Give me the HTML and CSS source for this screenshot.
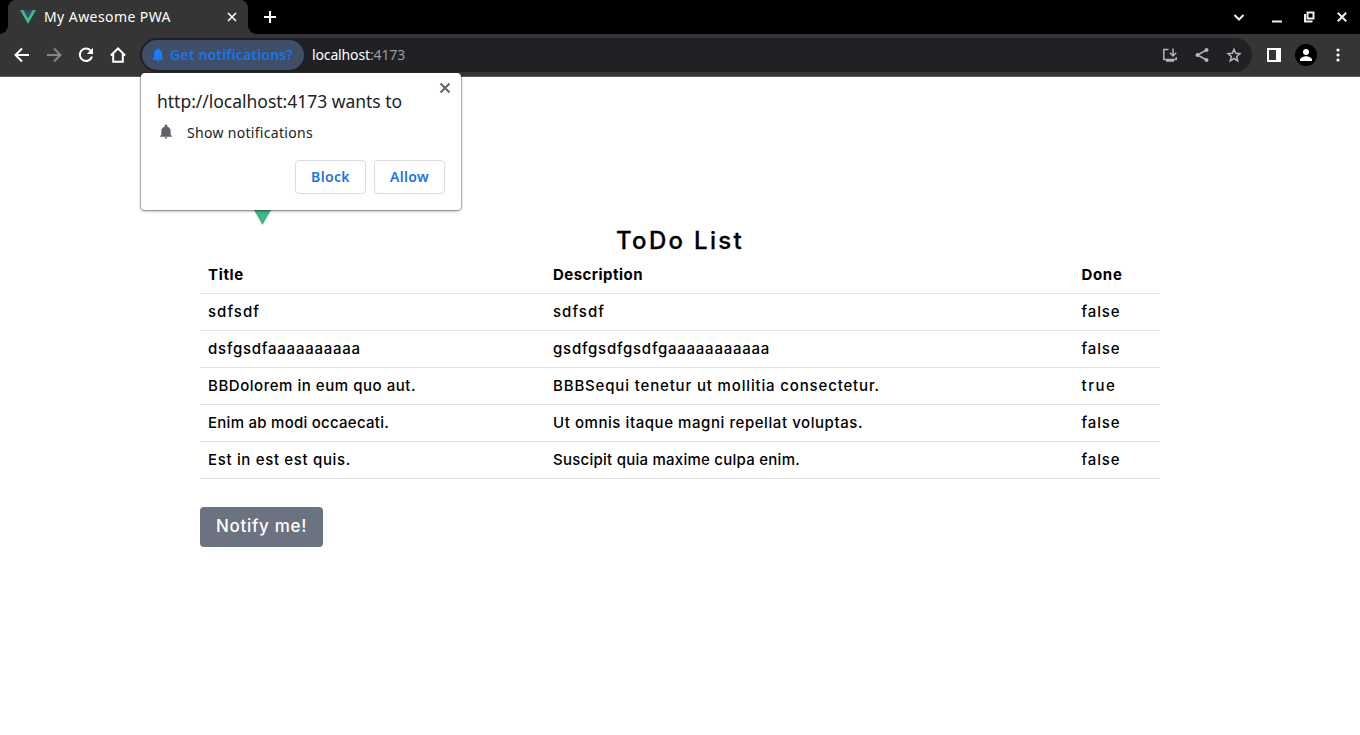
FILE: index.html
```html
<!DOCTYPE html>
<html lang="en">
<head>
<meta charset="utf-8">
<title>My Awesome PWA</title>
<link rel="stylesheet" href="styles.css">
</head>
<body>
<header class="tabstrip">
  <div class="tab">
    <svg class="favicon" viewBox="0 0 262 227"><path fill="#41b883" d="M161 0l-30 52L101 0H0l131 227L262 0z"/><path fill="#34495e" d="M161 0l-30 52L101 0H52l79 136L210 0z"/></svg>
    <span class="tab-title">My Awesome PWA</span>
    <svg class="tab-close" viewBox="0 0 16 16"><path d="M4 4l8 8M12 4l-8 8"/></svg>
  </div>
  <svg class="new-tab" viewBox="0 0 16 16"><path d="M8 2v12M2 8h12"/></svg>
  <div class="window-controls">
    <svg viewBox="0 0 16 16"><path d="M3.500 6L8 10.500 12.500 6"/></svg>
    <svg viewBox="0 0 16 16"><path d="M3 12.500h10"/></svg>
    <svg viewBox="0 0 16 16"><path d="M6.500 3.500h6v6h-6zM4 5v7.500h7.500"/></svg>
    <svg viewBox="0 0 16 16"><path d="M3.800 3.800l8.400 8.400M12.200 3.800l-8.400 8.400"/></svg>
  </div>
</header>
<nav class="toolbar">
  <div class="nav-buttons">
    <svg viewBox="0 0 16 16"><path d="M15 8H2M8 1.500L1.500 8 8 14.500"/></svg>
    <svg class="disabled" viewBox="0 0 16 16"><path d="M1 8h13M8 1.500L14.500 8 8 14.500"/></svg>
    <svg viewBox="0 0 16 16"><path d="M13 4A6.200 6.200 0 1 0 14 9.500"/><path class="solid" d="M15 .8v6.200H8.800z"/></svg>
    <svg viewBox="0 0 16 16"><path d="M.8 8.500L8 1.500l7.200 7M3.200 7v7.700h9.600V7"/></svg>
  </div>
  <div class="omnibox">
    <div class="chip">
      <svg viewBox="0 0 24 24"><path d="M12 22c1.100 0 2-.9 2-2h-4c0 1.100.9 2 2 2zM18 16V10.500c0-3.100-1.600-5.600-4.500-6.300V3.500a1.500 1.500 0 0 0-3 0v.7C7.600 4.900 6 7.400 6 10.500V16l-2 2v1h16v-1z"/></svg>
      <span class="chip-text">Get notifications?</span>
    </div>
    <div class="url"><span class="host">localhost</span><span class="port">:4173</span></div>
    <div class="omni-icons">
      <svg viewBox="0 0 16 16"><path d="M6.500 2.500H1.800v10h12.400V10M11 1.500v7M7.800 5.800L11 9l3.200-3.200"/><path class="solid" d="M4 12h8v2.800H4z"/></svg>
      <svg viewBox="0 0 16 16"><path d="M12.500 3L3.500 8l9 5"/><circle class="solid" cx="12.500" cy="3" r="2"/><circle class="solid" cx="3.500" cy="8" r="2"/><circle class="solid" cx="12.500" cy="13" r="2"/></svg>
      <svg viewBox="0 0 16 16"><path d="M8 2.200l1.700 4 4.300.4-3.300 2.900 1 4.300L8 11.500l-3.700 2.300 1-4.300L2 6.600l4.300-.4z"/></svg>
    </div>
  </div>
  <svg class="side-panel" viewBox="0 0 14 14"><path fill="#fff" fill-rule="evenodd" d="M0 0h14v14H0zM2 2v10h7V2z"/></svg>
  <svg class="avatar" viewBox="0 0 22 22"><circle cx="11" cy="11" r="11"/><g fill="#fff"><circle cx="11" cy="7.900" r="3"/><path d="M5 17v-1.500c0-2 4-3.300 6-3.300s6 1.300 6 3.300V17z"/></g></svg>
  <svg class="menu-dots" viewBox="0 0 4 14"><g fill="#fff"><circle cx="2" cy="2" r="1.600"/><circle cx="2" cy="7" r="1.600"/><circle cx="2" cy="12" r="1.600"/></g></svg>
</nav>
<section class="prompt">
  <svg class="prompt-close" viewBox="0 0 12 12"><path d="M1.500 1.500l9 9M10.500 1.500l-9 9"/></svg>
  <div class="prompt-title">http://localhost:4173 wants to</div>
  <div class="permission">
    <svg viewBox="0 0 24 24"><path d="M12 22c1.100 0 2-.9 2-2h-4c0 1.100.9 2 2 2zM19 16V10.500c0-3.300-1.900-5.800-5-6.500V2.800a2 2 0 0 0-4 0V4c-3.100.7-5 3.200-5 6.500V16l-2 2v1h18v-1z"/></svg>
    <span>Show notifications</span>
  </div>
  <div class="prompt-actions"><button>Block</button><button>Allow</button></div>
</section>
<main class="page">
  <svg class="logo" viewBox="0 0 262 227"><path fill="#41b883" d="M161 0l-30 52L101 0H0l131 227L262 0z"/><path fill="#34495e" d="M161 0l-30 52L101 0H52l79 136L210 0z"/></svg>
  <h1>ToDo List</h1>
  <table>
    <thead><tr><th>Title</th><th>Description</th><th>Done</th></tr></thead>
    <tbody>
      <tr class="wide"><td>sdfsdf</td><td>sdfsdf</td><td>false</td></tr>
      <tr class="loose"><td>dsfgsdfaaaaaaaaaa</td><td>gsdfgsdfgsdfgaaaaaaaaaaa</td><td>false</td></tr>
      <tr class="mixed"><td>BBDolorem in eum quo aut.</td><td>BBBSequi tenetur ut mollitia consectetur.</td><td>true</td></tr>
      <tr class="tight"><td>Enim ab modi occaecati.</td><td>Ut omnis itaque magni repellat voluptas.</td><td>false</td></tr>
      <tr class="medium"><td>Est in est est quis.</td><td>Suscipit quia maxime culpa enim.</td><td>false</td></tr>
    </tbody>
  </table>
  <button class="notify">Notify me!</button>
</main>
</body>
</html>
```
FILE: styles.css
```css
* { box-sizing: border-box; }
body { margin: 0; height: 735px; overflow: hidden; background: #fff; font-family: "Noto Sans", "Open Sans", sans-serif; }
svg { display: block; flex: none; }
span, td, th { white-space: nowrap; }

.tabstrip { display: flex; align-items: center; height: 34px; padding: 0 10px 0 8px; background: #000; }
.tab { position: relative; display: flex; align-items: center; width: 240px; height: 34px; padding: 0 8px 0 12px; background: #353535; border-radius: 8px 8px 0 0; color: #fff; font-size: 14px; }
.tab::before, .tab::after { content: ""; position: absolute; bottom: 0; width: 8px; height: 8px; }
.tab::before { left: -8px; background: radial-gradient(circle at 0 0, transparent 7.5px, #353535 8px); }
.tab::after { right: -8px; background: radial-gradient(circle at 100% 0, transparent 7.5px, #353535 8px); }
.tab-title { padding-bottom: 2px; letter-spacing: .427px; }
.favicon { width: 16px; height: 14px; margin-right: 8px; }
.tab-close { width: 16px; height: 16px; margin-left: auto; fill: none; stroke: #fff; stroke-width: 1.6; }
.new-tab { width: 16px; height: 16px; margin-left: 14px; fill: none; stroke: #fff; stroke-width: 2; }
.window-controls { display: flex; margin-left: auto; }
.window-controls svg { width: 16px; height: 16px; margin-left: 17px; fill: none; stroke: #eee; stroke-width: 2; }
.window-controls svg:nth-child(2) { margin-left: 22px; }
.window-controls svg:nth-child(3) { margin-left: 16px; }

.toolbar { display: flex; align-items: center; height: 43px; padding: 0 20px 0 14px; background: #353535; border-bottom: 1px solid #5b5b5b; }
.nav-buttons { display: flex; gap: 16px; width: 126px; }
.nav-buttons svg { width: 16px; height: 16px; fill: none; stroke: #fff; stroke-width: 2; }
.nav-buttons .disabled { stroke: #868686; }
.nav-buttons .solid { fill: #fff; stroke: none; }
.omnibox { display: flex; align-items: center; width: 1112px; height: 34px; padding: 2px; background: #202124; border-radius: 17px; }
.chip { display: flex; align-items: center; width: 162px; height: 30px; padding-left: 8px; border-radius: 15px; background: #3f4f68; color: #1a73e8; font-size: 14px; font-weight: 600; }
.chip svg { width: 16px; height: 16px; margin-right: 4px; fill: #1a7cff; }
.chip-text { padding-bottom: 2px; letter-spacing: .175px; }
.url { display: flex; margin-left: 8px; padding-bottom: 2px; font-size: 14px; letter-spacing: -.135px; color: #fff; }
.port { color: #9a9da1; }
.omni-icons { display: flex; gap: 16px; margin-left: auto; margin-right: 8px; }
.omni-icons svg { width: 16px; height: 16px; fill: none; stroke: #b4b5b7; stroke-width: 1.5; }
.omni-icons .solid { fill: #b4b5b7; stroke: none; }
.side-panel { width: 14px; height: 14px; margin-left: 15px; }
.avatar { width: 22px; height: 22px; margin-left: 14px; }
.menu-dots { width: 4px; height: 14px; margin-left: auto; }

.prompt { position: absolute; left: 141px; top: 73px; width: 320px; height: 137px; padding: 16px; background: #fff; border-radius: 4px; box-shadow: 0 0 1px 1px rgba(0,0,0,.22), 0 1px 3px rgba(0,0,0,.4); color: #202124; }
.prompt-close { position: absolute; right: 10px; top: 9px; width: 12px; height: 12px; fill: none; stroke: #5f6368; stroke-width: 2; }
.prompt-title { height: 24px; line-height: 24px; font-size: 17.500px; letter-spacing: -.02px; }
.permission { display: flex; align-items: center; height: 20px; margin-top: 10px; font-size: 14px; letter-spacing: .307px; }
.permission span { padding-bottom: 2px; }
.permission svg { width: 16px; height: 16px; margin: -3px 13px 0 1px; fill: #5f6368; }
.prompt-actions { display: flex; justify-content: flex-end; gap: 8px; margin-top: 17px; }
.prompt-actions button { display: flex; align-items: center; justify-content: center; width: 71px; height: 34px; padding: 0 0 2px; border: 1px solid #dadce0; border-radius: 4px; background: #fff; color: #1a73e8; font: 600 14px "Noto Sans", sans-serif; letter-spacing: .36px; }

.page { width: 960px; margin: 0 auto; padding-top: 40px; color: #000; font-family: Inter, sans-serif; }
.logo { width: 125px; height: 108px; }
h1 { margin: 0; height: 31px; line-height: 32px; text-align: center; font-size: 24px; font-weight: 500; letter-spacing: 2.3px; -webkit-text-stroke: .3px #000; }
table { width: 960px; border-collapse: collapse; table-layout: fixed; font-size: 15px; font-weight: 500; }
th, td { height: 37px; padding: 0 8px; border-bottom: 1px solid #dee2e6; text-align: left; }
th { font-weight: 700; letter-spacing: .67px; }
th:nth-child(1) { width: 345px; }
th:nth-child(2) { width: 528.500px; letter-spacing: .469px; }
td { letter-spacing: .875px; }
.wide td:not(:last-child) { letter-spacing: 1.036px; }
.loose td:not(:last-child) { letter-spacing: .762px; }
.mixed td:nth-child(1) { letter-spacing: .536px; }
.mixed td:nth-child(2) { letter-spacing: .841px; }
.mixed td:nth-child(3) { letter-spacing: 1.563px; }
.tight td:nth-child(1) { letter-spacing: .261px; }
.tight td:nth-child(2) { letter-spacing: .566px; }
.medium td:nth-child(1) { letter-spacing: .663px; }
.medium td:nth-child(2) { letter-spacing: .251px; }
.notify { display: flex; align-items: center; width: 123px; height: 40px; margin-top: 28px; padding: 0 16px 2px; border: 0; border-radius: 4px; background: #6b7280; color: #fff; font: 500 17px Inter, sans-serif; letter-spacing: .678px; white-space: nowrap; }
```
